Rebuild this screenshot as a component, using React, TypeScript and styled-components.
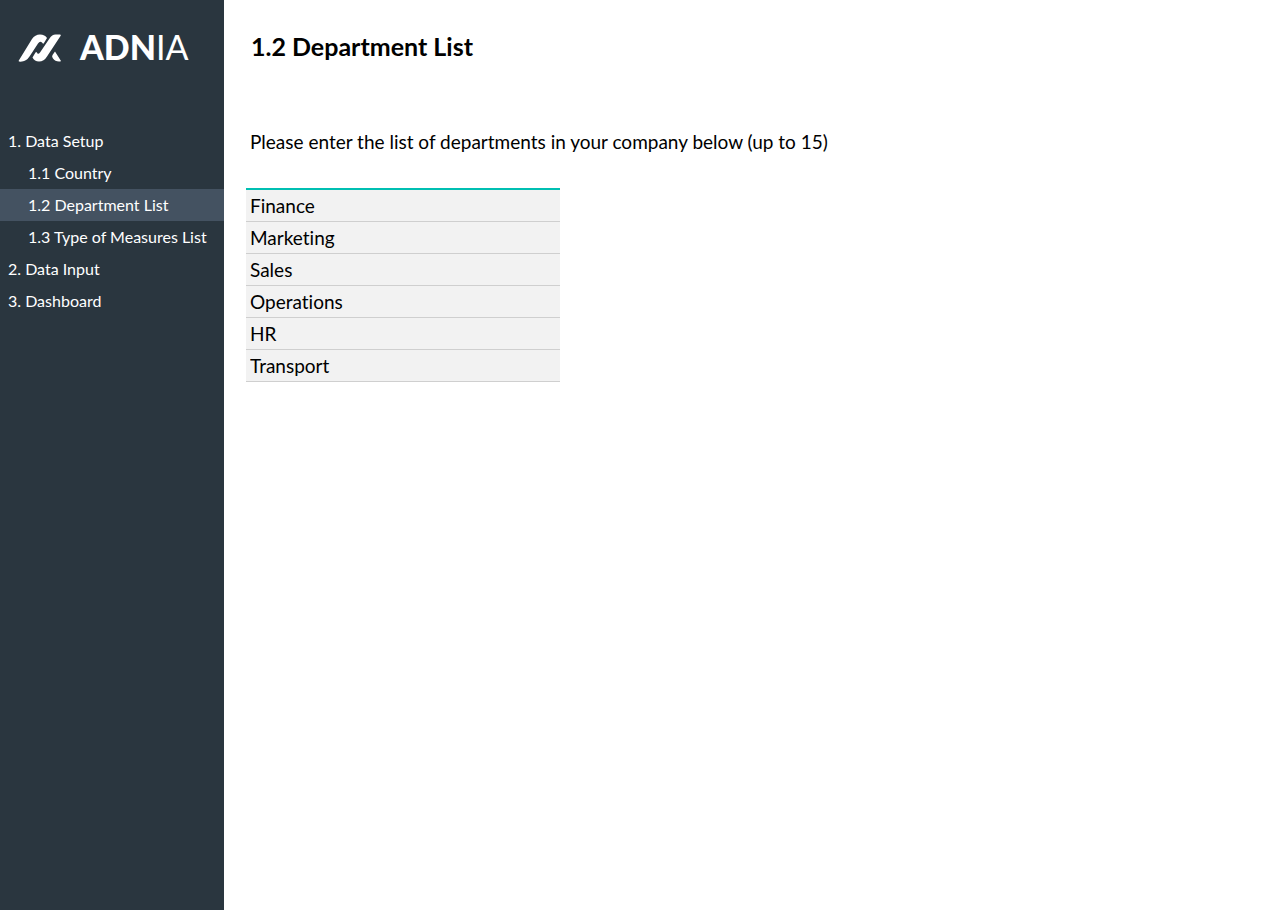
import React, { useState } from "react";
import styled, { createGlobalStyle } from "styled-components";

const GlobalStyle = createGlobalStyle`
  *, *::before, *::after { box-sizing: border-box; }
  body {
    margin: 0;
    background: #fff;
    color: #000;
    font-family: Lato, "Liberation Sans", sans-serif;
    font-variant-ligatures: none;
  }
`;

const Page = styled.div`
  display: flex;
  min-height: 100vh;
`;

const Sidebar = styled.aside`
  flex: 0 0 224px;
  background: #2a363f;
  color: #fff;
`;

const Brand = styled.div`
  display: flex;
  align-items: center;
  gap: 18px;
  height: 125px;
  padding: 0 18px 30px;
`;

const Wordmark = styled.span`
  font-size: 34px;
  line-height: 40px;
  font-weight: 900;
  padding-bottom: 2px;
`;

const WordmarkLight = styled.span`
  font-weight: 400;
`;

const NavLink = styled.a<{ $nested?: boolean }>`
  display: block;
  height: 32px;
  padding-left: ${(p) => (p.$nested ? 28 : 8)}px;
  font-size: 16px;
  line-height: 32px;
  color: #fff;
  text-decoration: none;
  white-space: nowrap;

  &[aria-current="page"] { background: #445261; }
`;

const Main = styled.main`
  flex: 1;
  min-width: 0;
  padding: 31px 22px;
`;

const Title = styled.h1`
  margin: 0;
  padding-left: 5px;
  font-size: 25px;
  line-height: 30px;
  font-weight: 700;
`;

const Intro = styled.p`
  margin: 68px 0 34px;
  padding-left: 4px;
  font-size: 19px;
  line-height: 25px;
`;

const DepartmentTable = styled.table`
  width: 314px;
  max-width: 100%;
  border-spacing: 0;
  border-top: 2px solid #00bfb2;
`;

const Cell = styled.td`
  padding: 0;
  border-bottom: 1px solid #cfcfcf;
  background: #f2f2f2;
`;

const DepartmentInput = styled.input`
  display: block;
  width: 100%;
  height: 31px;
  padding: 0 4px;
  border: 0;
  background: transparent;
  color: inherit;
  font: inherit;
  font-size: 19px;
  font-variant-ligatures: none;
`;

const navItems = [
  { label: "1. Data Setup" },
  { label: "1.1 Country", nested: true },
  { label: "1.2 Department List", nested: true, current: true },
  { label: "1.3 Type of Measures List", nested: true },
  { label: "2. Data Input" },
  { label: "3. Dashboard" },
];

function LogoMark() {
  return (
    <svg width="44" height="28" viewBox="0 0 44 28" fill="#fff" aria-hidden="true">
      <path d="M.5 27 L14 5 Q17 .5 22 .5 Q27 .5 29 4 L26 9 Q25 10.500 24 8.500 Q22 6.500 20 9.500 L11.500 22.500 Q8.500 27 4 27.500 Q1 28 .5 27Z" />
      <path d="M22 18.500 L31.500 4.500 Q34 .5 37.500 .5 H42 Q43.500 .5 42.500 2 L29 22.500 Q26 27.500 21 27.500 Q16.500 27.500 14.500 23.500 L17.500 18.500 Q18.500 17 19.500 19.500 Q20.500 20.500 22 18.500Z" />
      <path d="M37 17.500 L43 27 Q42.500 27.500 41 27.500 Q37 27.500 35 24.500 Q33.500 22.500 34.500 21Z" />
    </svg>
  );
}

export default function App() {
  const [departments, setDepartments] = useState([
    "Finance", "Marketing", "Sales", "Operations", "HR", "Transport",
  ]);

  return (
    <Page>
      <GlobalStyle />
      <Sidebar>
        <Brand>
          <LogoMark />
          <Wordmark>ADN<WordmarkLight>IA</WordmarkLight></Wordmark>
        </Brand>
        <nav>
          {navItems.map((item) => (
            <NavLink
              key={item.label}
              href="#"
              $nested={item.nested}
              aria-current={item.current ? "page" : undefined}
            >
              {item.label}
            </NavLink>
          ))}
        </nav>
      </Sidebar>
      <Main>
        <Title>1.2 Department List</Title>
        <Intro id="intro">Please enter the list of departments in your company below (up to 15)</Intro>
        <DepartmentTable aria-labelledby="intro">
          <tbody>
            {departments.map((name, i) => (
              <tr key={i}>
                <Cell>
                  <DepartmentInput
                    type="text"
                    aria-label={`Department ${i + 1}`}
                    value={name}
                    onChange={(e) =>
                      setDepartments(departments.map((d, j) => (j === i ? e.target.value : d)))
                    }
                  />
                </Cell>
              </tr>
            ))}
          </tbody>
        </DepartmentTable>
      </Main>
    </Page>
  );
}
